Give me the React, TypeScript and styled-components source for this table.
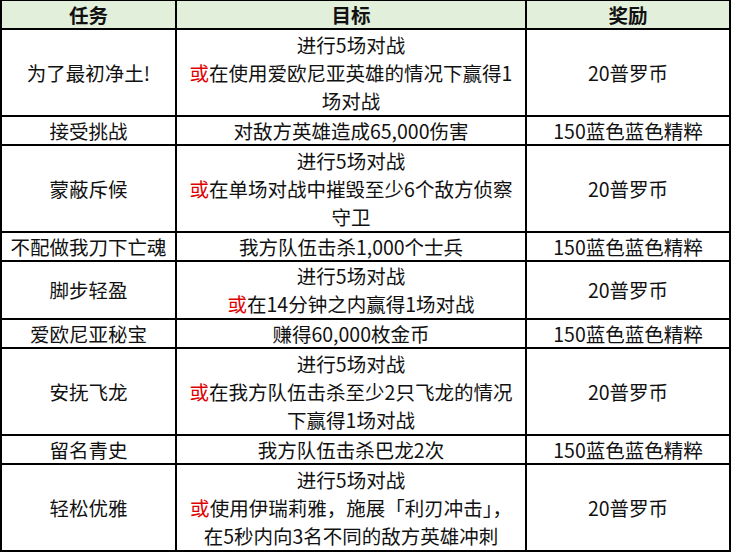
import styled, { createGlobalStyle } from 'styled-components'

const GlobalStyle = createGlobalStyle`
    html, body {
        margin: 0;
        padding: 0;
        background: #ffffff;
    }
`

const LINE = 29

const Table = styled.div`
    width: 731px;
    border-top: 1px solid #000;
    border-left: 2px solid #000;
    box-sizing: border-box;
    font-family: 'Noto Sans CJK SC', 'Noto Sans', sans-serif;
    font-size: 19.5px;
    color: #111;
`

const Row = styled.div<{ $lines: number; $head?: boolean }>`
    display: grid;
    grid-template-columns: 175px 350px 204px;
    height: ${(p) => p.$lines * LINE}px;
    box-sizing: border-box;
    border-bottom: 2px solid #000;
    background: ${(p) => (p.$head ? '#e2efda' : '#ffffff')};
    font-weight: ${(p) => (p.$head ? 700 : 400)};
`

const Cell = styled.div`
    display: flex;
    flex-direction: column;
    align-items: center;
    justify-content: center;
    border-right: 2px solid #000;
    box-sizing: border-box;
    line-height: 28px;
    white-space: nowrap;
`

const Or = styled.span`
    color: #e00000;
`

interface Task {
    name: string
    goal: string[]
    reward: string
}

const tasks: Task[] = [
    {
        name: '为了最初净土!',
        goal: ['进行5场对战', '或在使用爱欧尼亚英雄的情况下赢得1', '场对战'],
        reward: '20普罗币',
    },
    { name: '接受挑战', goal: ['对敌方英雄造成65,000伤害'], reward: '150蓝色蓝色精粹' },
    {
        name: '蒙蔽斥候',
        goal: ['进行5场对战', '或在单场对战中摧毁至少6个敌方侦察', '守卫'],
        reward: '20普罗币',
    },
    { name: '不配做我刀下亡魂', goal: ['我方队伍击杀1,000个士兵'], reward: '150蓝色蓝色精粹' },
    {
        name: '脚步轻盈',
        goal: ['进行5场对战', '或在14分钟之内赢得1场对战'],
        reward: '20普罗币',
    },
    { name: '爱欧尼亚秘宝', goal: ['赚得60,000枚金币'], reward: '150蓝色蓝色精粹' },
    {
        name: '安抚飞龙',
        goal: ['进行5场对战', '或在我方队伍击杀至少2只飞龙的情况', '下赢得1场对战'],
        reward: '20普罗币',
    },
    { name: '留名青史', goal: ['我方队伍击杀巴龙2次'], reward: '150蓝色蓝色精粹' },
    {
        name: '轻松优雅',
        goal: ['进行5场对战', '或使用伊瑞莉雅，施展「利刃冲击」，', '在5秒内向3名不同的敌方英雄冲刺'],
        reward: '20普罗币',
    },
]

const GoalLine = ({ text }: { text: string }) =>
    text.startsWith('或') ? (
        <div>
            <Or>或</Or>
            {text.slice(1)}
        </div>
    ) : (
        <div>{text}</div>
    )

export default function App() {
    return (
        <>
            <GlobalStyle />
            <Table>
                <Row $lines={1} $head>
                    <Cell>任务</Cell>
                    <Cell>目标</Cell>
                    <Cell>奖励</Cell>
                </Row>
                {tasks.map((task) => (
                    <Row key={task.name} $lines={task.goal.length}>
                        <Cell>{task.name}</Cell>
                        <Cell>
                            {task.goal.map((line) => (
                                <GoalLine key={line} text={line} />
                            ))}
                        </Cell>
                        <Cell>{task.reward}</Cell>
                    </Row>
                ))}
            </Table>
        </>
    )
}
